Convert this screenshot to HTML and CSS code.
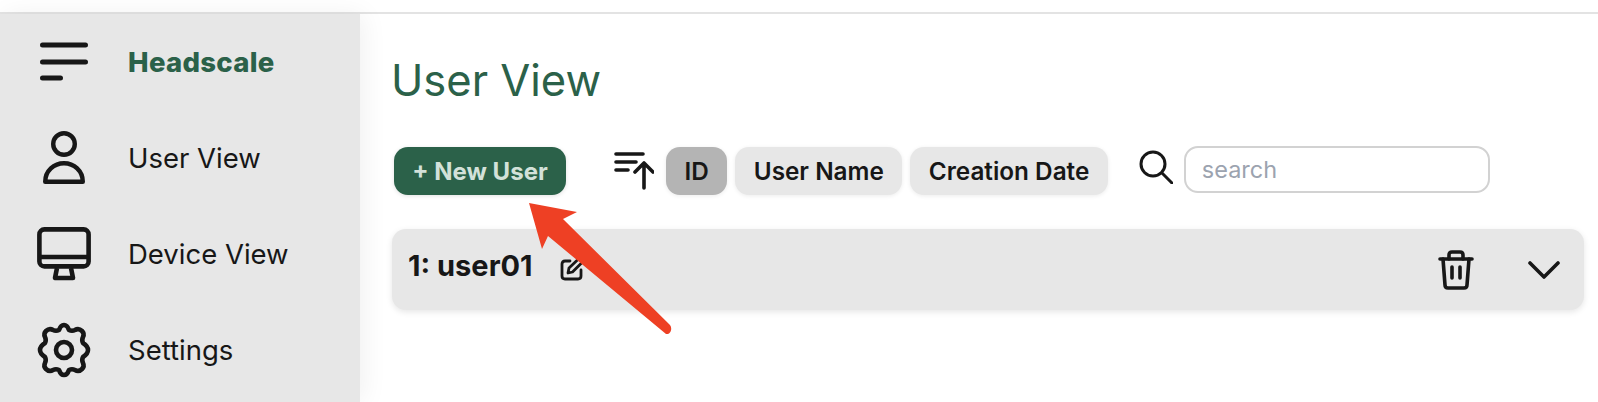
FILE: index.html
```html
<!DOCTYPE html>
<html lang="en">

<head>
    <meta charset="UTF-8">
    <meta name="viewport" content="width=device-width, initial-scale=1.0">
    <title>Headscale</title>
    <link rel="stylesheet" href="styles.css">
</head>

<body>
    <div class="container">
        <aside class="sidebar">
            <div class="nav-row brand">
                <svg class="nav-icon" viewBox="0 0 56 56" fill="none" stroke="currentColor" stroke-width="5" stroke-linecap="round">
                    <path d="M5.500 11H48.500M5.500 28H48.500M5.500 44H23.500" />
                </svg>
                <span>Headscale</span>
            </div>
            <div class="nav-row">
                <svg class="nav-icon" viewBox="0 0 56 56" fill="none" stroke="currentColor" stroke-width="4.400" stroke-linejoin="round">
                    <circle cx="27" cy="14" r="10.800" />
                    <path d="M8.200 51.800C8.200 41 17 33.200 27 33.200C37 33.200 45.800 41 45.800 51.800Z" />
                </svg>
                <span>User View</span>
            </div>
            <div class="nav-row">
                <svg class="nav-icon" viewBox="0 0 56 56" fill="none" stroke="currentColor" stroke-width="4.600" stroke-linejoin="round">
                    <rect x="2.400" y="3.400" width="49.200" height="37" rx="5" />
                    <path d="M2.400 31H51.600" />
                    <path d="M20 42L18 52H36L34 42" />
                </svg>
                <span>Device View</span>
            </div>
            <div class="nav-row">
                <svg class="nav-icon" viewBox="0 0 56 56" fill="none" stroke="currentColor" stroke-width="4.600" stroke-linejoin="round">
                    <g transform="translate(-1 0)">
                        <circle cx="28" cy="28" r="8" />
                        <path d="M28 3C31 3 32 5 33 8C35 9 37 9 39 8C42 6 44 7 46 9C48 11 48 13 47 15C46 17 46 19 47 21C50 23 52 25 52 28C52 31 50 33 47 35C46 37 46 39 47 41C48 43 48 45 46 47C44 49 42 50 39 48C37 47 35 47 33 48C32 51 31 53 28 53C25 53 24 51 23 48C21 47 19 47 17 48C14 50 12 49 10 47C8 45 8 43 9 41C10 39 10 37 9 35C6 33 4 31 4 28C4 25 6 23 9 21C10 19 10 17 9 15C8 13 8 11 10 9C12 7 14 6 17 8C19 9 21 9 23 8C24 5 25 3 28 3Z" />
                    </g>
                </svg>
                <span>Settings</span>
            </div>
        </aside>

        <main class="main-content">
            <h1>User View</h1>
            <div class="toolbar">
                <button class="new-user">+ New User</button>
                <svg class="sort-icon" viewBox="0 0 40 38" fill="none" stroke="currentColor" stroke-width="3.600" stroke-linecap="round" stroke-linejoin="round">
                    <path d="M2 2H29M2 10H22M2 18H14" />
                    <path d="M21 20L30 11L39 20M30 12V36" />
                </svg>
                <div class="chips">
                    <span class="chip active">ID</span>
                    <span class="chip">User Name</span>
                    <span class="chip">Creation Date</span>
                </div>
                <svg class="search-icon" viewBox="0 0 34 34" fill="none" stroke="currentColor" stroke-width="3" stroke-linecap="round">
                    <circle cx="14" cy="14" r="12" />
                    <path d="M23 23L33 33" />
                </svg>
                <input class="search" type="text" placeholder="search">
            </div>

            <div class="user-row">
                <span class="user-name">1: user01</span>
                <svg class="edit-icon" viewBox="0 0 24 24" fill="none" stroke="currentColor" stroke-width="2.800" stroke-linecap="round" stroke-linejoin="round">
                    <path d="M10 4H5C3 4 2 5 2 7V19C2 21 3 22 5 22H18C20 22 21 21 21 19V13" />
                    <path d="M8 16L9 11L19 1.500L22.500 5L12.500 15Z" />
                </svg>
                <svg class="trash-icon" viewBox="0 0 36 40" fill="none" stroke="currentColor" stroke-width="3.600" stroke-linecap="round" stroke-linejoin="round">
                    <path d="M2 9H34" />
                    <path d="M11 9V5C11 3 12 2 14 2H22C24 2 25 3 25 5V9" />
                    <path d="M5 9L7 35C7 37 8 38 10 38H26C28 38 29 37 29 35L31 9" />
                    <path d="M14 17V28M22 17V28" />
                </svg>
                <svg class="chevron-icon" viewBox="0 0 32 18" fill="none" stroke="currentColor" stroke-width="3.600" stroke-linecap="round" stroke-linejoin="round">
                    <path d="M2 2L16 16L30 2" />
                </svg>
            </div>
        </main>

        <svg class="arrow" viewBox="0 0 160 140">
            <path d="M9 0L57 9L43 16L150 122C153 126 150 132 146 131L28 33L22 46Z" />
        </svg>
    </div>
</body>

</html>
```

FILE: styles.css
```css
* {
    margin: 0;
    padding: 0;
    box-sizing: border-box;
}

html,
body {
    height: 100%;
    overflow: hidden;
}

body {
    font-family: Inter, "Liberation Sans", sans-serif;
    background-color: #fff;
    color: #171717;
    padding-top: 12px;
}

.container {
    display: flex;
    height: 390px;
    border-top: 2px solid #e3e3e3;
    position: relative;
}

.sidebar {
    width: 360px;
    flex-shrink: 0;
    background-color: #e7e7e7;
    box-shadow: 4px 0 24px rgba(0, 0, 0, 0.06);
}

.nav-row {
    height: 96px;
    display: flex;
    align-items: center;
    padding-left: 37px;
    font-size: 27.500px;
}

.nav-row span {
    margin-left: -1px;
}

.nav-icon {
    width: 56px;
    height: 56px;
    margin-right: 36px;
}

.brand {
    color: #2b6149;
    font-weight: 800;
    letter-spacing: 0.3px;
}

.brand .nav-icon {
    color: #171717;
}

.main-content {
    flex: 1;
    padding: 0 14px 0 33px;
}

h1 {
    font-size: 43.500px;
    font-weight: 400;
    line-height: 48px;
    color: #2b6149;
    margin-top: 42px;
    margin-left: -2px;
}

.toolbar {
    display: flex;
    align-items: center;
    height: 48px;
    margin-top: 43px;
}

.new-user {
    width: 172px;
    height: 48px;
    margin-left: 1px;
    border: none;
    border-radius: 14px;
    background-color: #2b6149;
    color: #d3e1d9;
    font-family: inherit;
    font-size: 24px;
    font-weight: 700;
    box-shadow: 0 1px 4px rgba(0, 0, 0, 0.12);
}

.sort-icon {
    width: 40px;
    height: 38px;
    margin-left: 48px;
}

.chips {
    display: flex;
    gap: 8px;
    margin-left: 12px;
}

.chip {
    height: 48px;
    line-height: 48px;
    padding: 0 18.500px;
    border-radius: 14px;
    background-color: #e7e7e7;
    font-size: 24.300px;
    font-weight: 600;
    box-shadow: 0 1px 4px rgba(0, 0, 0, 0.08);
}

.chip.active {
    background-color: #b4b4b4;
}

.search-icon {
    width: 34px;
    height: 34px;
    margin-left: 31px;
    margin-bottom: 9px;
}

.search {
    width: 306px;
    height: 47px;
    margin-left: 11px;
    margin-bottom: 3px;
    padding: 0 16px;
    border: 2px solid #d2d2d2;
    border-radius: 14px;
    font-family: inherit;
    font-size: 23.500px;
    outline: none;
}

.search::placeholder {
    color: #9ca3af;
}

.user-row {
    display: flex;
    align-items: center;
    height: 81px;
    margin-top: 34px;
    margin-left: -1px;
    padding: 0 24px 0 16px;
    border-radius: 14px;
    background-color: #e7e7e7;
    box-shadow: 0 2px 6px rgba(0, 0, 0, 0.1);
}

.user-name {
    font-size: 29px;
    font-weight: 700;
    margin-top: -8px;
}

.edit-icon {
    width: 24px;
    height: 24px;
    margin-left: 27px;
    margin-bottom: 2px;
}

.trash-icon {
    width: 36px;
    height: 40px;
    margin-left: auto;
}

.chevron-icon {
    width: 32px;
    height: 18px;
    margin-left: 54px;
}

.arrow {
    position: absolute;
    left: 520px;
    top: 189px;
    width: 160px;
    height: 140px;
    fill: #ee4024;
}
```
